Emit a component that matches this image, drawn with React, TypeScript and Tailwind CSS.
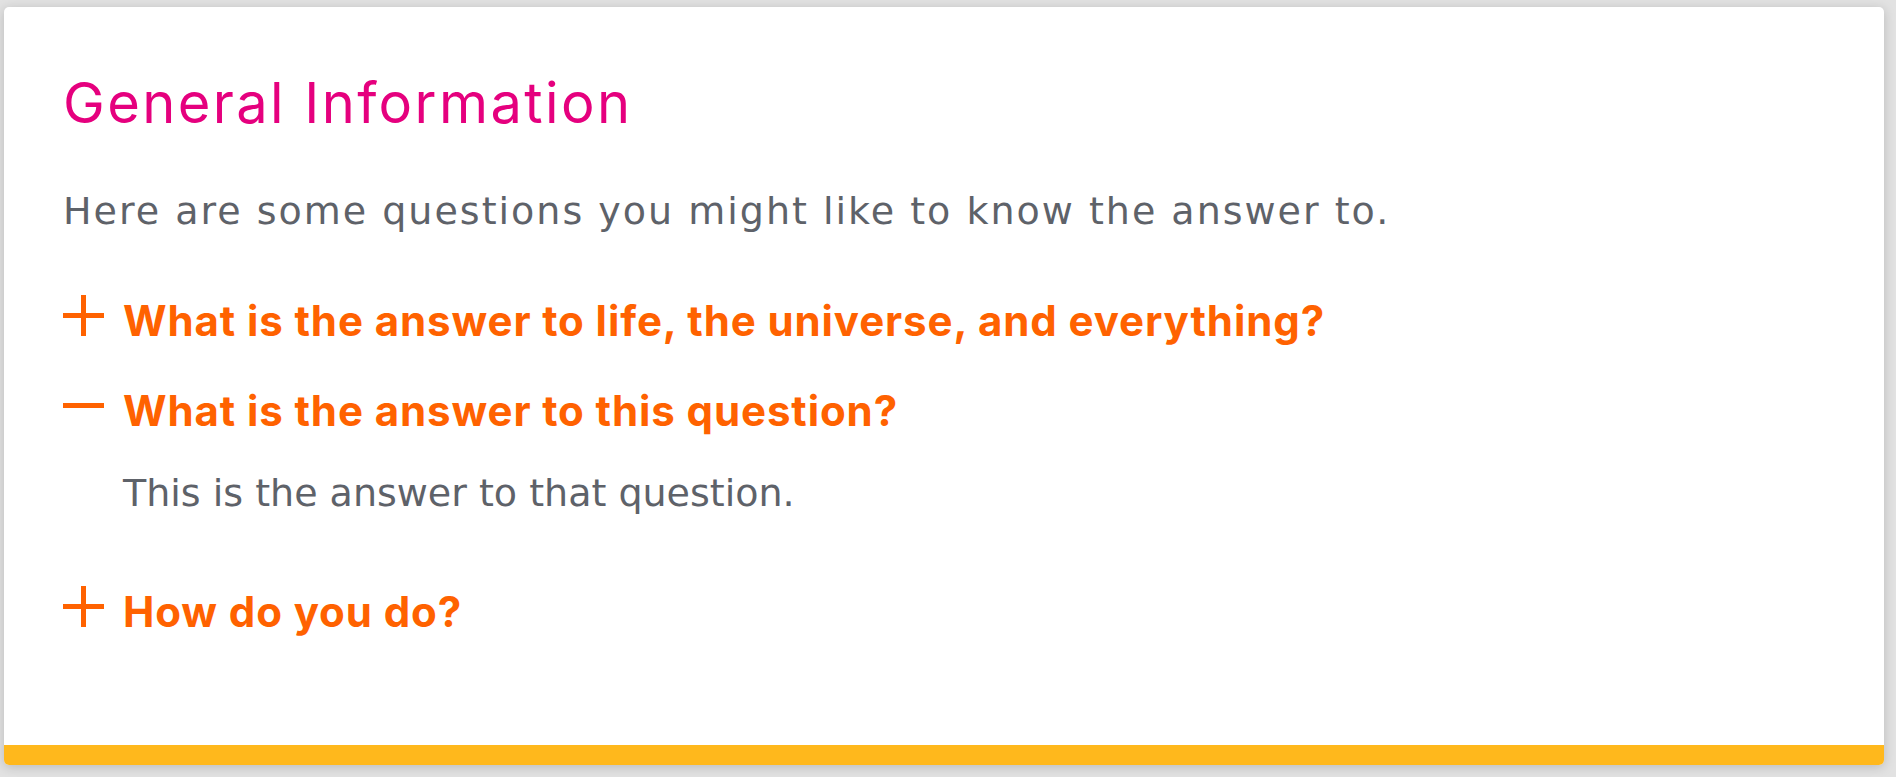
import React, { useState } from 'react';

const faqs = [
  { q: 'What is the answer to life, the universe, and everything?', a: '42.' },
  { q: 'What is the answer to this question?', a: 'This is the answer to that question.' },
  { q: 'How do you do?', a: 'Very well, thank you.' },
];

function ToggleIcon({ open }: { open: boolean }) {
  return (
    <svg width="42" height="41" viewBox="0 0 42 41" className="mt-[-5px] shrink-0" aria-hidden>
      <rect x="0" y="18" width="41" height="5" fill="#ff6200" />
      {!open && <rect x="18" y="0" width="5" height="41" fill="#ff6200" />}
    </svg>
  );
}

export default function App() {
  const [openIndex, setOpenIndex] = useState<number | null>(1);

  return (
    <div className="min-h-screen bg-[#e2e2e2] pt-[7px] pl-[4px]" style={{ fontFamily: 'Inter, "Noto Sans", sans-serif' }}>
      <div className="w-[1880px] h-[758px] bg-white rounded-[5px] overflow-hidden flex flex-col shadow-[0_2px_12px_rgba(0,0,0,0.18)]">
        <div className="flex-1 pl-[59px] pt-[68px]">
          <h1 className="text-[56px] leading-[56px] font-normal tracking-[2.4px] text-[#e5007e]">General Information</h1>
          <p className="mt-[62px] font-['DejaVu_Sans'] text-[38px] leading-[36px] tracking-[2px] text-[#5e6269]">
            Here are some questions you might like to know the answer to.
          </p>

          <div className="mt-[71px]">
            {faqs.map((item, i) => {
              const open = openIndex === i;
              return (
                <div key={item.q} className={i === 0 ? '' : 'mt-[48px]'}>
                  <button
                    type="button"
                    onClick={() => setOpenIndex(open ? null : i)}
                    className="flex items-start text-left cursor-pointer"
                  >
                    <ToggleIcon open={open} />
                    <span className="ml-[18px] text-[42px] leading-[42px] font-bold tracking-[0.9px] text-[#ff6200]">{item.q}</span>
                  </button>
                  {open && (
                    <p className="mt-[43px] pb-[32px] pl-[60px] font-['DejaVu_Sans'] text-[38px] leading-[36px] text-[#5e6269]">{item.a}</p>
                  )}
                </div>
              );
            })}
          </div>
        </div>
        <div className="h-[20px] bg-[#ffb81c]" />
      </div>
    </div>
  );
}
